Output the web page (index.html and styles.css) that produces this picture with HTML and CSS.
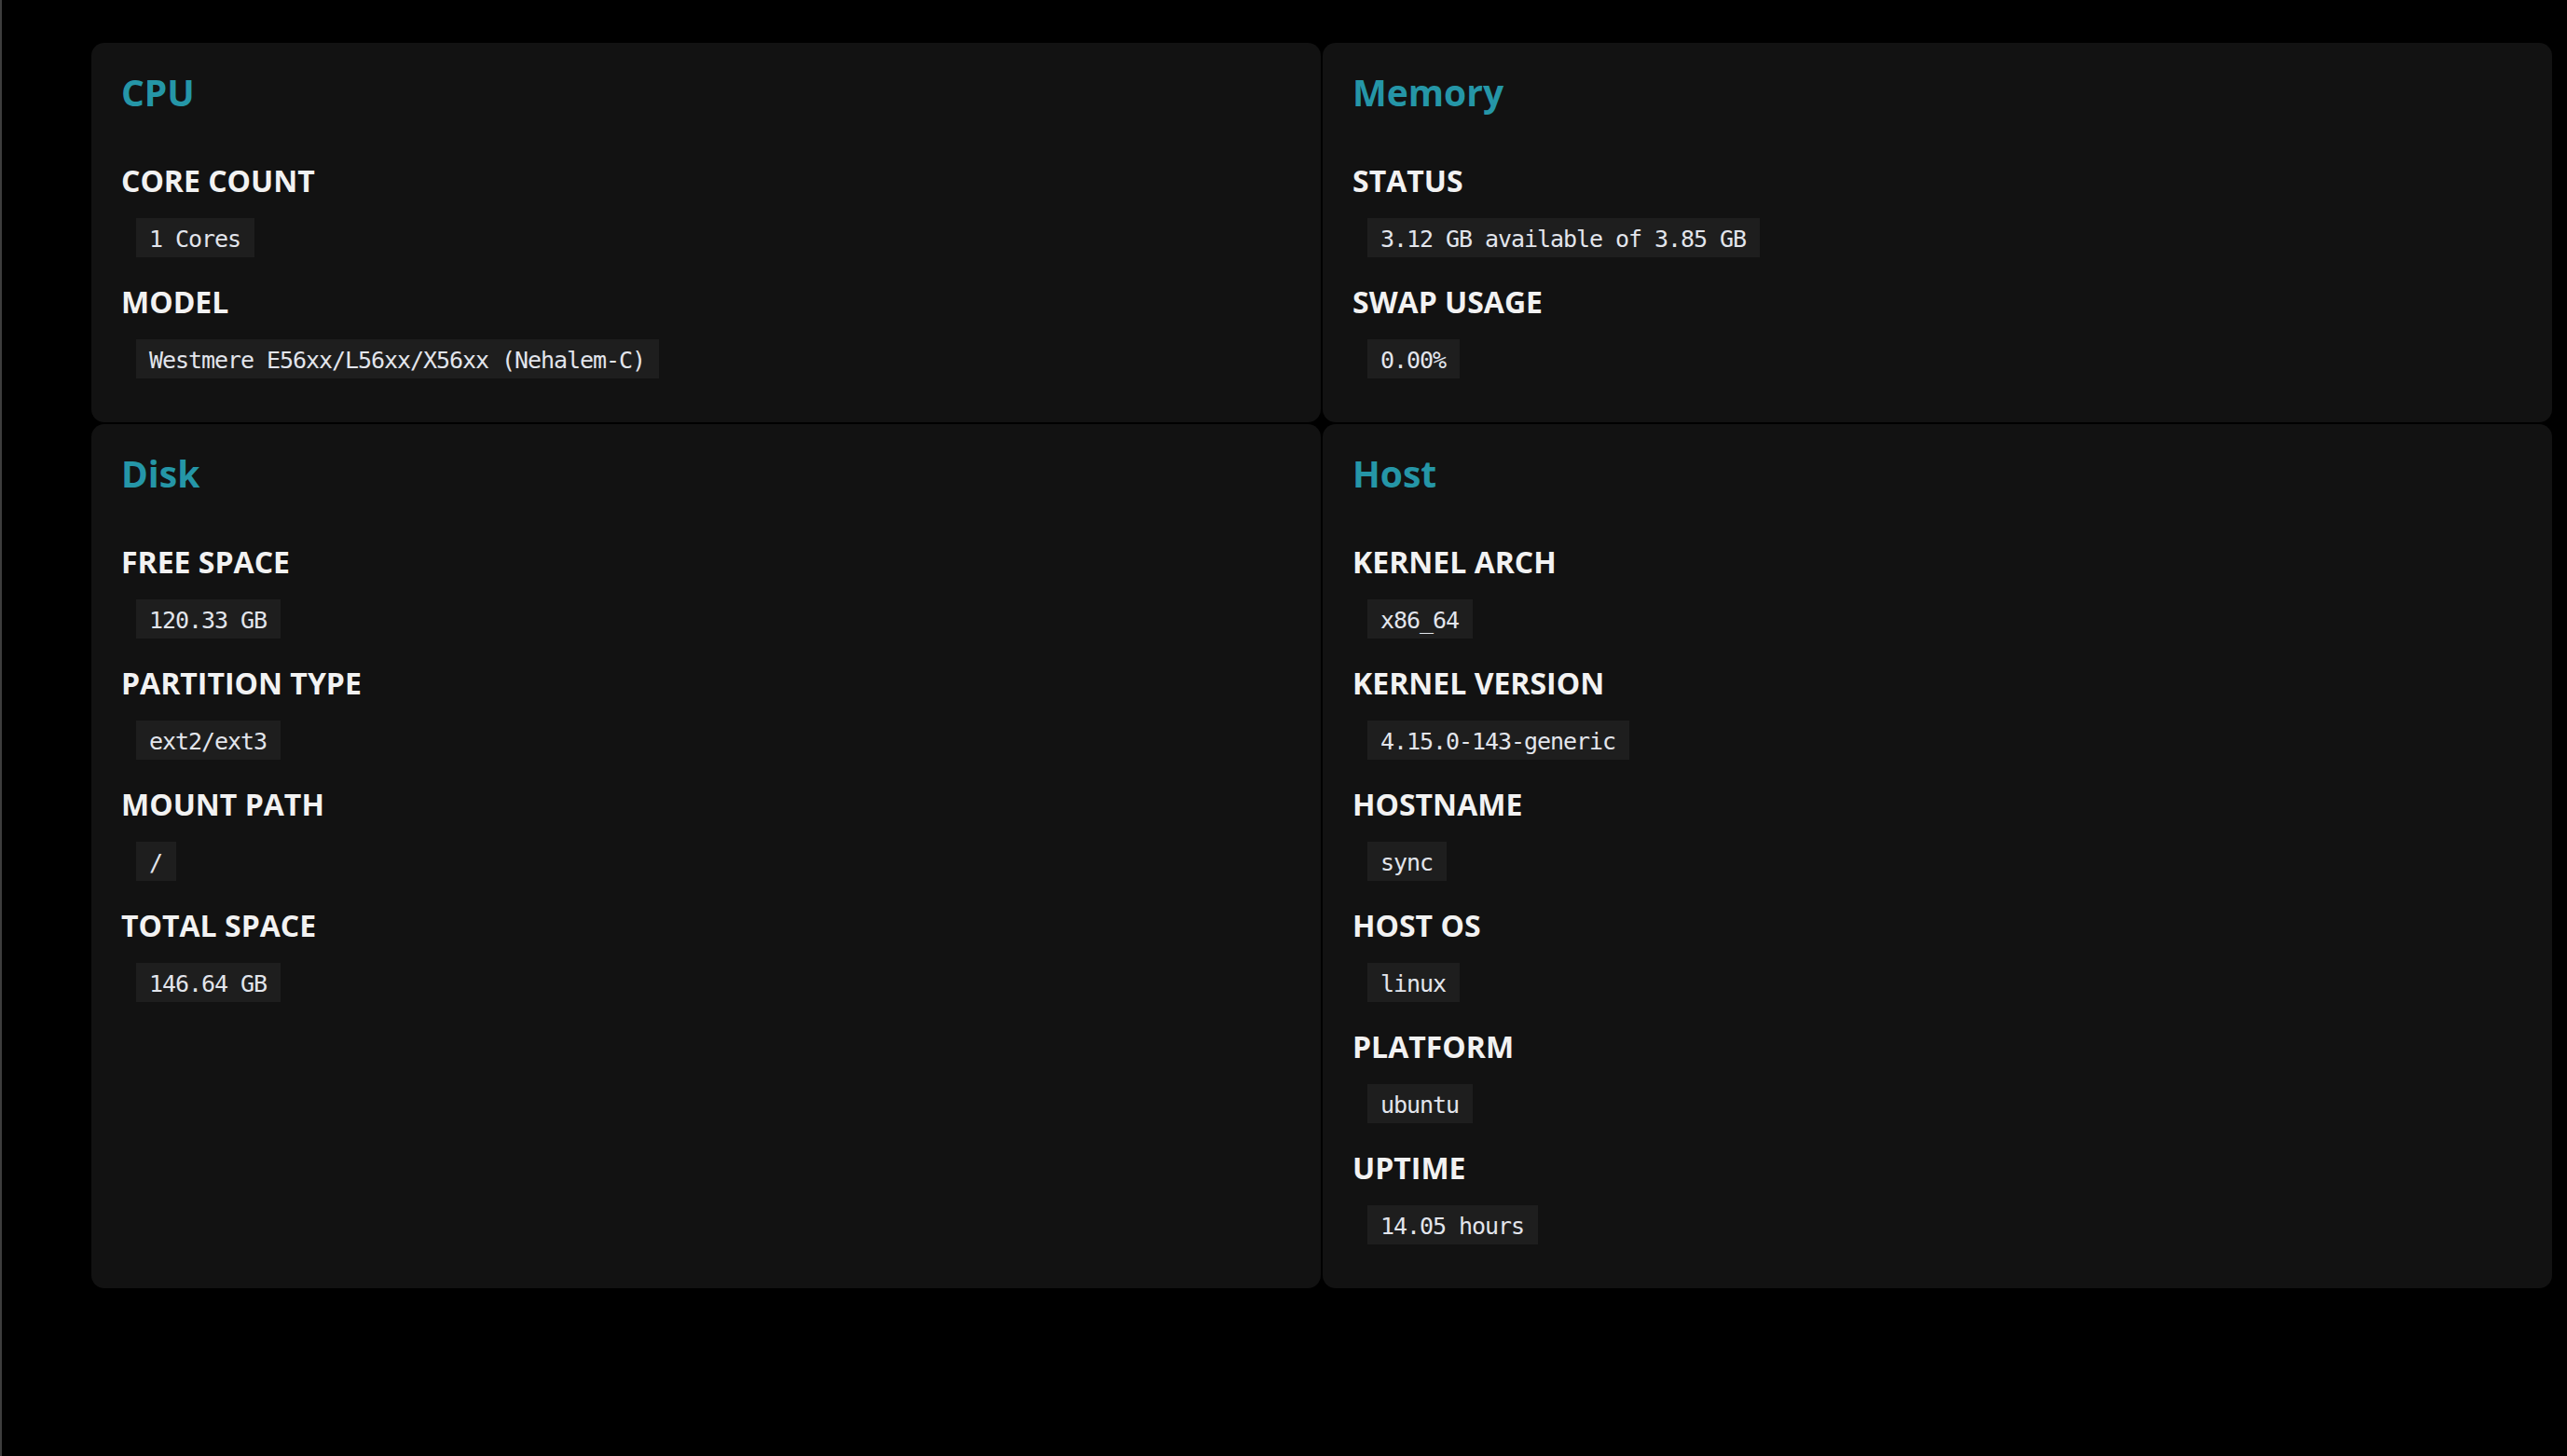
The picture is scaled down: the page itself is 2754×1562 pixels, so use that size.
FILE: index.html
```html
<!DOCTYPE html>
<html lang="en">
<head>
<meta charset="utf-8">
<title>System Info</title>
<link rel="stylesheet" href="styles.css">
</head>
<body>
<div class="frame">
  <main class="grid">
    <section class="card">
      <h2 class="card-title">CPU</h2>
      <div class="items">
        <div class="item"><div class="label">CORE COUNT</div><code class="chip">1 Cores</code></div>
        <div class="item"><div class="label">MODEL</div><code class="chip">Westmere E56xx/L56xx/X56xx (Nehalem-C)</code></div>
      </div>
    </section>
    <section class="card">
      <h2 class="card-title">Memory</h2>
      <div class="items">
        <div class="item"><div class="label">STATUS</div><code class="chip">3.12 GB available of 3.85 GB</code></div>
        <div class="item"><div class="label">SWAP USAGE</div><code class="chip">0.00%</code></div>
      </div>
    </section>
    <section class="card">
      <h2 class="card-title">Disk</h2>
      <div class="items">
        <div class="item"><div class="label">FREE SPACE</div><code class="chip">120.33 GB</code></div>
        <div class="item"><div class="label">PARTITION TYPE</div><code class="chip">ext2/ext3</code></div>
        <div class="item"><div class="label">MOUNT PATH</div><code class="chip">/</code></div>
        <div class="item"><div class="label">TOTAL SPACE</div><code class="chip">146.64 GB</code></div>
      </div>
    </section>
    <section class="card">
      <h2 class="card-title">Host</h2>
      <div class="items">
        <div class="item"><div class="label">KERNEL ARCH</div><code class="chip">x86_64</code></div>
        <div class="item"><div class="label">KERNEL VERSION</div><code class="chip">4.15.0-143-generic</code></div>
        <div class="item"><div class="label">HOSTNAME</div><code class="chip">sync</code></div>
        <div class="item"><div class="label">HOST OS</div><code class="chip">linux</code></div>
        <div class="item"><div class="label">PLATFORM</div><code class="chip">ubuntu</code></div>
        <div class="item"><div class="label">UPTIME</div><code class="chip">14.05 hours</code></div>
      </div>
    </section>
  </main>
</div>
</body>
</html>
```

FILE: styles.css
```css
html, body {
  margin: 0;
  padding: 0;
  background: #000;
  height: 100%;
  overflow: hidden;
}

.frame {
  min-height: 100vh;
  border-left: 2px solid #3d3d3d;
  box-sizing: border-box;
}

.grid {
  display: grid;
  grid-template-columns: 1fr 1fr;
  gap: 2px;
  padding: 46px 16px 0 96px;
}

.card {
  background: #121212;
  border-radius: 14px;
  padding: 29px 32px 47px;
}

.card-title {
  margin: 0 0 52px;
  font-family: "Open Sans", "Noto Sans", sans-serif;
  font-weight: 700;
  font-size: 39px;
  line-height: 48px;
  color: #2596a7;
}

.items {
  display: flex;
  flex-direction: column;
  gap: 29px;
}

.item {
  display: flex;
  flex-direction: column;
  align-items: flex-start;
  gap: 21px;
}

.label {
  font-family: "Open Sans", "Noto Sans", sans-serif;
  font-weight: 700;
  font-size: 32px;
  line-height: 38px;
  color: #f2f2f2;
}

.chip {
  margin-left: 16px;
  background: #1e1e1e;
  color: #e2e5ec;
  font-family: "DejaVu Sans Mono", "Liberation Mono", monospace;
  font-size: 25px;
  letter-spacing: -1.05px;
  line-height: 30px;
  padding: 8px 15px 4px 14px;
  white-space: pre;
}
```
